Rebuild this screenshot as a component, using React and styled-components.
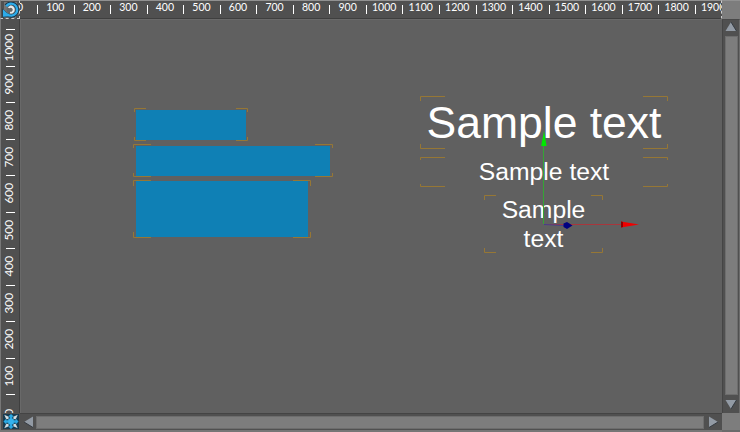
import React from "react";
import styled, { createGlobalStyle } from "styled-components";

const Global = createGlobalStyle`
  * { box-sizing: border-box; }
  body { margin: 0; background: #5f5f5f; font-family: "Liberation Sans", Arial, sans-serif; }
`;

const Editor = styled.div`
  display: grid;
  grid-template-columns: 20px 702px 18px;
  grid-template-rows: 19px 394px 19px;
  width: 740px;
  height: 432px;
  overflow: hidden;
  background: #606060;
`;

const Corner = styled.div`
  display: flex;
  background: #505050;
  border-top: 1px solid #919191;
  border-left: 1px solid #777;
  border-right: 1px dashed #ccc;
  border-bottom: 1px dashed #ccc;
  svg { display: block; margin: 1px 0 0 1px; flex: none; }
`;

const TopRuler = styled.div`
  display: flex;
  overflow: hidden;
  background: #505050;
  border-top: 1px solid #919191;
  border-bottom: 1px solid #3f3f3f;
  border-right: 1px dashed #ccc;
`;

const LeftRuler = styled.div`
  display: flex;
  flex-direction: column;
  overflow: hidden;
  background: #505050;
  border-left: 1px solid #777;
  border-right: 1px solid #3f3f3f;
`;

const Label = styled.span`
  font: 10.5px/12px Lato, sans-serif;
  color: #fff;
  white-space: nowrap;
`;

const TopCell = styled.div`
  flex: none;
  display: flex;
  justify-content: center;
  width: ${(p) => (p.$first ? 17 : 36.56)}px;
  height: 12px;
`;

const TopTick = styled.div`
  flex: none;
  width: 1px;
  height: 9px;
  margin: 4px -1px 0 0;
  background: #fff;
`;

const ZeroLabel = styled(Label)`
  margin-left: -17px;
`;

const LeftCell = styled.div`
  flex: none;
  display: flex;
  align-items: center;
  justify-content: center;
  width: 17px;
  height: ${(p) => (p.$first ? 10 : 36.56)}px;
`;

const LeftTick = styled.div`
  flex: none;
  height: 1px;
  width: 9px;
  margin: 0 0 -1px 5px;
  background: #fff;
`;

const SideLabel = styled(Label)`
  font-size: 11.8px;
  margin-right: 2px;
  writing-mode: vertical-rl;
  transform: rotate(180deg);
`;

const Canvas = styled.div`
  position: relative;
  overflow: hidden;
  background: #606060;
  box-shadow: inset 1px 1px 0 #696969;
`;

const Item = styled.div`
  position: absolute;
  left: ${(p) => p.$x}px;
  top: ${(p) => p.$y}px;
  width: ${(p) => p.$w}px;
  height: ${(p) => p.$h}px;
`;

const Fill = styled.div`
  height: 100%;
  padding: ${(p) => p.$pad};
  &::before {
    content: "";
    display: block;
    height: 100%;
    background: #0f80b5;
  }
`;

const Caption = styled.div`
  color: #fff;
  text-align: center;
  font-size: ${(p) => p.$size}px;
  line-height: ${(p) => p.$line}px;
  padding: ${(p) => p.$top}px ${(p) => p.$side || 0}px 0;
`;

const Overlay = styled.svg`
  position: absolute;
  left: 0;
  top: 0;
  overflow: visible;
`;

const Track = styled.div`
  display: flex;
  flex-direction: ${(p) => (p.$vertical ? "column" : "row")};
  align-items: center;
  background: #505050;
  border-top: 1px solid ${(p) => (p.$vertical ? "#494949" : "#444")};
  ${(p) => (p.$vertical ? "border-left: 1px solid #454545; border-right: 1px solid #6b6b6b;" : "border-bottom: 2px solid #767676;")}
`;

const Arrow = styled.svg`
  flex: none;
  display: block;
`;

const Thumb = styled.div`
  flex: 1;
  background: #7d7d7d;
  border: 1px solid #6d6d6d;
  ${(p) => (p.$vertical ? "width: 13px;" : "height: 13px;")}
`;

const Block = styled.div`
  background: #7d7d7d;
  border-top: ${(p) => (p.$top ? "1px solid #919191" : "0")};
  border-bottom: ${(p) => (p.$top ? "0" : "2px solid #6b6b6b")};
`;

const FitCorner = styled.div`
  padding: 1px 0 0 2px;
  background: #505050;
  border-left: 1px solid #777;
  border-bottom: 2px solid #767676;
  svg { display: block; }
`;

function Frame({ x, y, w, h, hx, hy, children }) {
  const r = w - 0.5;
  const b = h - 0.5;
  return (
    <Item $x={x - 20} $y={y - 19} $w={w} $h={h}>
      {children}
      <Overlay width={w} height={h} fill="none" stroke="#967735">
        <path d={`M.5 ${hy}V.5H${hx}M${w - hx} .5H${r}V${hy}M.5 ${h - hy}V${b}H${hx}M${w - hx} ${b}H${r}V${h - hy}`} />
      </Overlay>
    </Item>
  );
}

function ResetIcon() {
  return (
    <svg width="17" height="16" viewBox="0 0 17 16">
      <path d="M2 0h13v3h2v10h-3v3H2z" fill="#858585" opacity=".7" />
      <path d="M4.2 3.8A6.2 6.2 0 1 1 5.2 12.5" fill="none" stroke="#173448" strokeWidth="3.8" />
      <path d="M.5 6.5V15.5l9-.5z" fill="#173448" />
      <circle cx="9" cy="7.8" r="4.4" fill="#686868" />
      <path d="M5.7 5.4L8.3 3.6A4 4 0 1 1 8 11.5V9.7A2 2 0 1 0 7.6 6.2z" fill="#e8ecee" />
      <path d="M4.2 4.2A6 6 0 1 1 5 12" fill="none" stroke="#2eabe8" strokeWidth="2.4" />
      <path d="M1 7.3V14.8l7.2-.6z" fill="#2eabe8" />
    </svg>
  );
}

function FitIcon() {
  const arrow = "M0-7.5L3-4.7H1.3V-2H-1.3V-4.7H-3z";
  return (
    <svg width="16" height="15" viewBox="-8 -7.5 16 15">
      <path d="M-8-7.5h16v15h-16z" fill="#183b50" />
      {[45, 135, 225, 315].map((a) => (
        <path key={a} d="M0-9.5L1.7-5 0-3.5-1.7-5z" fill="#d5dde1" transform={`rotate(${a})`} />
      ))}
      {[0, 90, 180, 270].map((a) => (
        <path key={a} d={arrow} fill="#2ba9e4" transform={`rotate(${a})`} />
      ))}
      <path d="M-2.7-2.7h5.4v5.4h-5.4z" fill="#35b3ed" />
    </svg>
  );
}

const arrows = {
  up: ["M6 1L11.5 10H.5z", "M6 1L11.5 10"],
  down: ["M.5 1H11.5L6 10z", "M11.5 1L6 10"],
  left: ["M10 .5V11.5L1 6z", "M10 11.5L1 6"],
  right: ["M1 .5V11.5L10 6z", "M1 11.5L10 6"],
};

const arrowBox = {
  up: [12, 16, "0 -1 12 16"],
  down: [12, 18, "0 -4 12 18"],
  left: [16, 12, "-3 0 16 12"],
  right: [18, 12, "-4 0 18 12"],
};

function ScrollArrow({ dir }) {
  const [shape, edge] = arrows[dir];
  const [width, height, viewBox] = arrowBox[dir];
  return (
    <Arrow width={width} height={height} viewBox={viewBox}>
      <path d={shape} fill="#929aa4" />
      <path d={edge} stroke="#353b42" fill="none" />
    </Arrow>
  );
}

const topValues = Array.from({ length: 19 }, (_, i) => (i + 1) * 100);
const leftValues = Array.from({ length: 11 }, (_, i) => 1000 - i * 100);

export default function App() {
  return (
    <>
      <Global />
      <Editor>
        <Corner><ResetIcon /></Corner>
        <TopRuler>
          <TopCell $first><ZeroLabel>0</ZeroLabel></TopCell>
          {topValues.map((v) => (
            <React.Fragment key={v}>
              <TopTick />
              <TopCell><Label>{v}</Label></TopCell>
            </React.Fragment>
          ))}
        </TopRuler>
        <Block $top />

        <LeftRuler>
          <LeftCell $first />
          {leftValues.map((v) => (
            <React.Fragment key={v}>
              <LeftTick />
              <LeftCell><SideLabel>{v}</SideLabel></LeftCell>
            </React.Fragment>
          ))}
        </LeftRuler>
        <Canvas>
          <Frame x={134} y={108} w={114} h={33} hx={12} hy={4}><Fill $pad="2px 2px 1px 2px" /></Frame>
          <Frame x={133} y={144} w={200} h={33} hx={18} hy={4}><Fill $pad="2px 3px 1px 3px" /></Frame>
          <Frame x={133} y={180} w={178} h={58} hx={18} hy={6}><Fill $pad="1px 3px 1px 3px" /></Frame>
          <Frame x={420} y={96} w={248} h={53} hx={25} hy={5}><Caption $size={44.5} $line={53} $top={0}>Sample text</Caption></Frame>
          <Frame x={420} y={157} w={248} h={30} hx={25} hy={3}><Caption $size={24.7} $line={30} $top={0}>Sample text</Caption></Frame>
          <Frame x={484} y={195} w={119} h={58} hx={12} hy={5}><Caption $size={24.7} $line={28.5} $top={1} $side={10}>Sample text</Caption></Frame>
          <Overlay width="702" height="394" viewBox="20 19 702 394">
            <path d="M543.5 224V145" stroke="#35a535" />
            <path d="M544 131L546.6 146H541.2z" fill="#00e800" />
            <path d="M544 224.5H622" stroke="#a8363c" />
            <path d="M621 221.5L639 224.5 621 227.5z" fill="#f00000" />
            <path d="M621 221.5l2 .5v5l-2 .5z" fill="#8f0000" />
            <path d="M544 224.5L565 225.5" stroke="#403f90" />
            <path d="M563.5 223.5L567 222 572.5 225.5 567 229 563.5 227z" fill="#000080" />
          </Overlay>
        </Canvas>
        <Track $vertical>
          <ScrollArrow dir="up" />
          <Thumb $vertical />
          <ScrollArrow dir="down" />
        </Track>

        <FitCorner><FitIcon /></FitCorner>
        <Track>
          <ScrollArrow dir="left" />
          <Thumb />
          <ScrollArrow dir="right" />
        </Track>
        <Block />
      </Editor>
    </>
  );
}
